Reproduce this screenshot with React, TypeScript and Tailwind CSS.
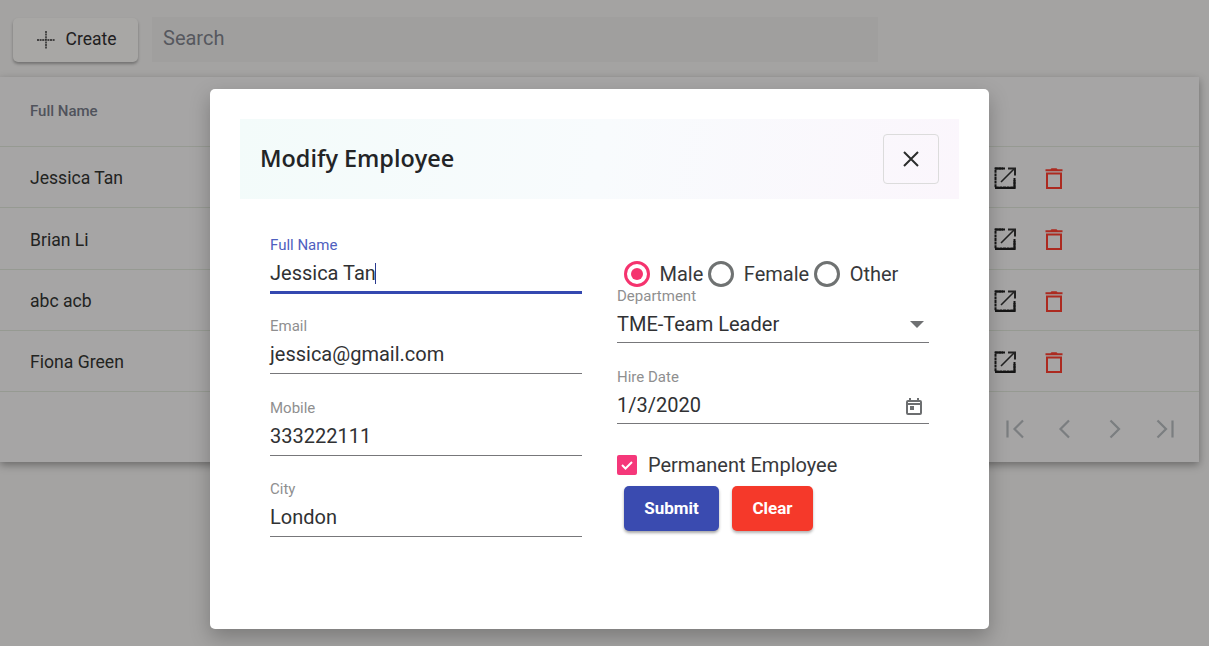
import React from "react";

const F = "font-['Roboto',sans-serif]";

function EditIcon() {
  return (
    <svg width="24" height="24" viewBox="0 0 24 24" fill="none" stroke="#151515" strokeWidth="2">
      <path d="M12 2.5H2.5v19h19V12" strokeDasharray="3 0.6" />
      <path d="M2 2.5h8M21.5 14v8H2" />
      <path d="M8 16 21.5 2.5" stroke="#222" strokeWidth="1.6" />
      <path d="M15 2.5h7v7" stroke="#222" strokeWidth="2" />
    </svg>
  );
}

function TrashIcon() {
  return (
    <svg width="24" height="24" viewBox="0 0 24 24" fill="none">
      <path d="M3.5 3.2h5l1-1h5l1 1h5v2h-17z" fill="#ac2a20" />
      <path d="M5 7.5h14v14.5H5z" stroke="#ac2a20" strokeWidth="2" />
    </svg>
  );
}

function Row({ name }: { name: string }) {
  return (
    <div className="flex h-[61.25px] items-center justify-between border-t border-[#969a92] pl-[30px] text-[17.6px] text-[#22231f]">
      <span className="mt-[3px]">{name}</span>
      <div className="mr-[133px] flex items-center gap-[25px] pt-[2px]">
        <EditIcon />
        <TrashIcon />
      </div>
    </div>
  );
}

function Field({ label, value, focus, right, cursor, short }: { label: string; value: string; focus?: boolean; right?: React.ReactNode; cursor?: boolean; short?: boolean }) {
  return (
    <div className={`flex w-[312px] flex-col ${short ? "h-[56px]" : "h-[57px]"} ${focus ? "mb-[-1px] h-[58px] border-b-[3px] border-[#3448b0]" : "border-b border-[#77777a]"}`}>
      <span className={`text-[15px] leading-[18px] ${focus ? "text-[#4f60c0]" : "text-[#8f8f90]"}`}>{label}</span>
      <div className="mt-[7px] flex items-center justify-between pr-[6px] text-[20px] leading-[24px] text-[#303133]">
        <span className="flex items-center">
          {value}
          {cursor && <span className="ml-[-1px] inline-block h-[21px] w-px bg-[#2a3a90]" />}
        </span>
        {right}
      </div>
    </div>
  );
}

function Radio({ on, label }: { on?: boolean; label: string }) {
  return (
    <div className="flex items-center">
      <span className={`flex h-[26px] w-[26px] items-center justify-center rounded-full border-[3px] ${on ? "border-[#f5336e]" : "border-[#6f7272]"}`}>
        {on && <span className="h-[12px] w-[12px] rounded-full bg-[#f5336e]" />}
      </span>
      <span className="ml-[9.5px] text-[20px] text-[#37383a]">{label}</span>
    </div>
  );
}

const pager = ["M4.5 3.5v17M20 3.5 11.5 12l8.5 8.5", "M16 3.5 7.5 12l8.5 8.5", "M7.5 3.5 16 12l-8.5 8.5", "M4.5 3.5 13 12l-8.5 8.5M19.5 3.5v17"];

export default function App() {
  return (
    <div className={`relative h-[646px] w-[1209px] overflow-hidden bg-[#a4a3a2] ${F}`}>
      <div className="flex items-center pl-[13px] pt-[17px]">
        <button className="flex h-[44px] w-[125px] items-center justify-center gap-[10px] rounded-[5px] bg-[#a8a7a5] pl-[1px] text-[17.5px] font-normal text-[#1f2021] shadow-[0_2px_3px_rgba(0,0,0,0.3)]">
          <svg width="20" height="20" viewBox="0 0 20 20" fill="none" stroke="#222" strokeWidth="1.4">
            <path d="M10 1v18M1 10h18" strokeDasharray="2 0.6" />
          </svg>
          Create
        </button>
        <div className="ml-[14px] flex h-[45px] w-[726px] items-center bg-[#a09f9e] pb-[3px] pl-[11px] text-[20px] text-[#56585e]">
          Search
        </div>
      </div>

      <div className="mt-[15px] h-[385px] w-[1199px] bg-[#a6a5a5] shadow-[0_3px_8px_rgba(0,0,0,0.35)]">
        <div className="flex h-[69px] items-center pb-[1px] pl-[30px] text-[15px] font-medium text-[#50535c]">Full Name</div>
        <Row name="Jessica Tan" />
        <Row name="Brian Li" />
        <Row name="abc acb" />
        <Row name="Fiona Green" />
        <div className="flex h-[71px] items-center justify-end gap-[26px] border-t border-[#969a92] pr-[22px] pt-[4px]">
          {pager.map((d) => (
            <svg key={d} width="24" height="24" viewBox="0 0 24 24" fill="none" stroke="#7b7e80" strokeWidth="2.2">
              <path d={d} />
            </svg>
          ))}
        </div>
      </div>

      <div className="absolute left-[210px] top-[89px] h-[540px] w-[779px] rounded-[5px] bg-white p-[30px] shadow-[0_8px_20px_rgba(0,0,0,0.25)]">
        <div className="flex h-[80px] items-center justify-between bg-[linear-gradient(100deg,#f3fbfa,#f8fbfd_50%,#fbf6fc)] px-[20px]">
          <span className="font-['Open_Sans',sans-serif] text-[23.4px] font-semibold text-[#232426]">Modify Employee</span>
          <div className="flex h-[50px] w-[56px] items-center justify-center rounded-[4px] border border-[#dcdcdc]">
            <svg width="24" height="24" viewBox="0 0 24 24" fill="none" stroke="#2b2d2c" strokeWidth="2">
              <path d="M5 5l14 14M19 5L5 19" />
            </svg>
          </div>
        </div>

        <div className="mt-[37px] flex gap-[35px] pl-[30px]">
          <div className="flex w-[312px] flex-col gap-[24.33px]">
            <Field label="Full Name" value="Jessica Tan" focus cursor />
            <Field label="Email" value="jessica@gmail.com" />
            <Field label="Mobile" value="333222111" />
            <Field label="City" value="London" />
          </div>
          <div className="flex w-[312px] flex-col">
            <div className="ml-[7px] flex h-[51px] items-center gap-[5px] pt-[25px]">
              <Radio on label="Male" />
              <Radio label="Female" />
              <Radio label="Other" />
            </div>
            <Field
              short
              label="Department"
              value="TME-Team Leader"
              right={
                <svg width="14" height="8" viewBox="0 0 14 8" className="mt-[1px] mr-[-1px]">
                  <path d="M0 0h14L7 7z" fill="#6f7072" />
                </svg>
              }
            />
            <div className="mt-[25px]">
              <Field
                short
                label="Hire Date"
                value="1/3/2020"
                right={
                  <svg width="18" height="19" viewBox="0 0 18 19" fill="none" className="mt-[2px]">
                    <path d="M3 4h12a1 1 0 0 1 1 1v11a1 1 0 0 1-1 1H3a1 1 0 0 1-1-1V5a1 1 0 0 1 1-1z" stroke="#6c6e70" strokeWidth="2" />
                    <path d="M2 7h14" stroke="#6c6e70" strokeWidth="2" />
                    <path d="M5 1v3M13 1v3" stroke="#6c6e70" strokeWidth="2" />
                    <rect x="5" y="9" width="4" height="4" fill="#6c6e70" />
                  </svg>
                }
              />
            </div>
            <div className="mt-[26px] flex items-center">
              <span className="flex h-[20px] w-[20px] items-center justify-center rounded-[2px] bg-[#f5387a]">
                <svg width="16" height="16" viewBox="0 0 16 16" fill="none" stroke="#fff" strokeWidth="2">
                  <path d="M3 8l3.5 3.5L13 5" />
                </svg>
              </span>
              <span className="ml-[11px] text-[20px] text-[#37383a]">Permanent Employee</span>
            </div>
            <div className="ml-[7px] mt-[6px] flex gap-[13px]">
              <button className="flex h-[45px] w-[95px] items-center justify-center rounded-[5px] bg-[#3a4bb0] text-[17px] font-bold text-white shadow-[0_2px_3px_rgba(0,0,0,0.35)]">
                Submit
              </button>
              <button className="flex h-[45px] w-[81px] items-center justify-center rounded-[5px] bg-[#f5392a] text-[17px] font-bold text-white shadow-[0_2px_3px_rgba(0,0,0,0.3)]">
                Clear
              </button>
            </div>
          </div>
        </div>
      </div>
    </div>
  );
}
